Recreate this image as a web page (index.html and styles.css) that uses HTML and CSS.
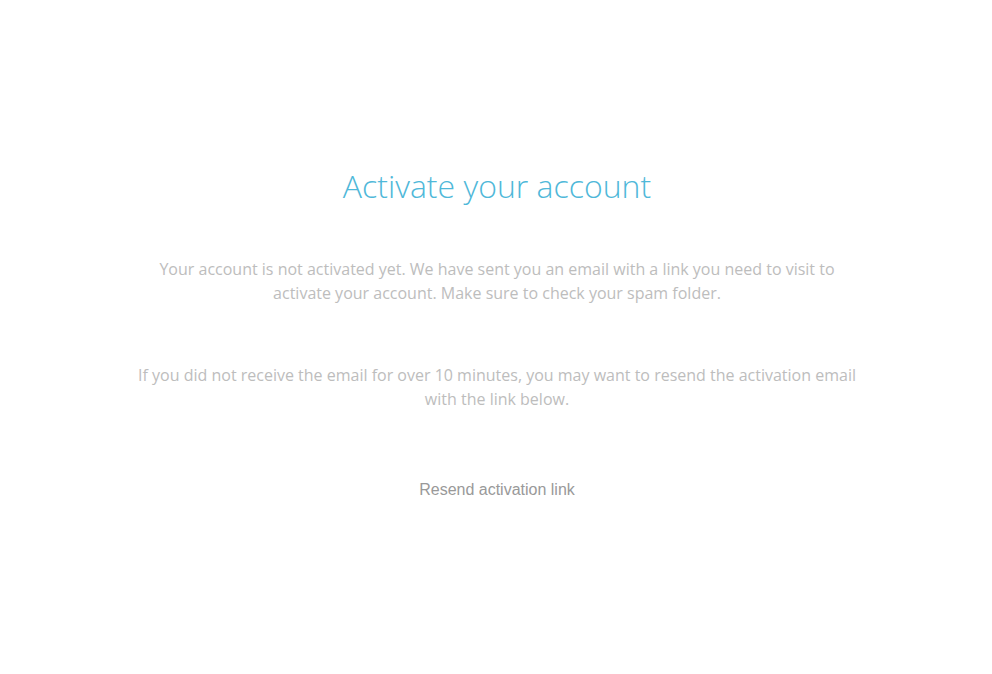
FILE: index.html
```html
<!DOCTYPE html>
<html lang="en">
<head>
    <meta charset="UTF-8">
    <meta name="viewport" content="width=device-width, initial-scale=1.0">
    <title>Activate your account</title>
    <link rel="stylesheet" href="styles.css">
</head>
<body>
    <div class="container">
        <h1 class="title">Activate your account</h1>
        <p class="text">Your account is not activated yet. We have sent you an email with a link you need to visit to activate your account. Make sure to check your spam folder.</p>
        <p class="text">If you did not receive the email for over 10 minutes, you may want to resend the activation email with the link below.</p>
        <a class="resend" href="#">Resend activation link</a>
    </div>
</body>
</html>
```

FILE: styles.css
```css
body {
    font-family: "Open Sans", sans-serif;
    margin: 0;
    padding: 0;
    background-color: #fff;
}

.container {
    max-width: 720px;
    margin: 0 auto;
    padding: 164px 0 0 2px;
    text-align: center;
}

.title {
    font-size: 32px;
    font-weight: 300;
    color: #4fb8d9;
    margin: 0 0 49px;
    line-height: 44px;
}

.text {
    font-size: 16px;
    line-height: 24px;
    color: #bdbdbd;
    margin: 0 0 58px;
}

.resend {
    display: inline-block;
    font-family: "Liberation Sans", Arial, sans-serif;
    font-size: 16px;
    color: #999;
    text-decoration: none;
    margin-top: 12px;
}
```
